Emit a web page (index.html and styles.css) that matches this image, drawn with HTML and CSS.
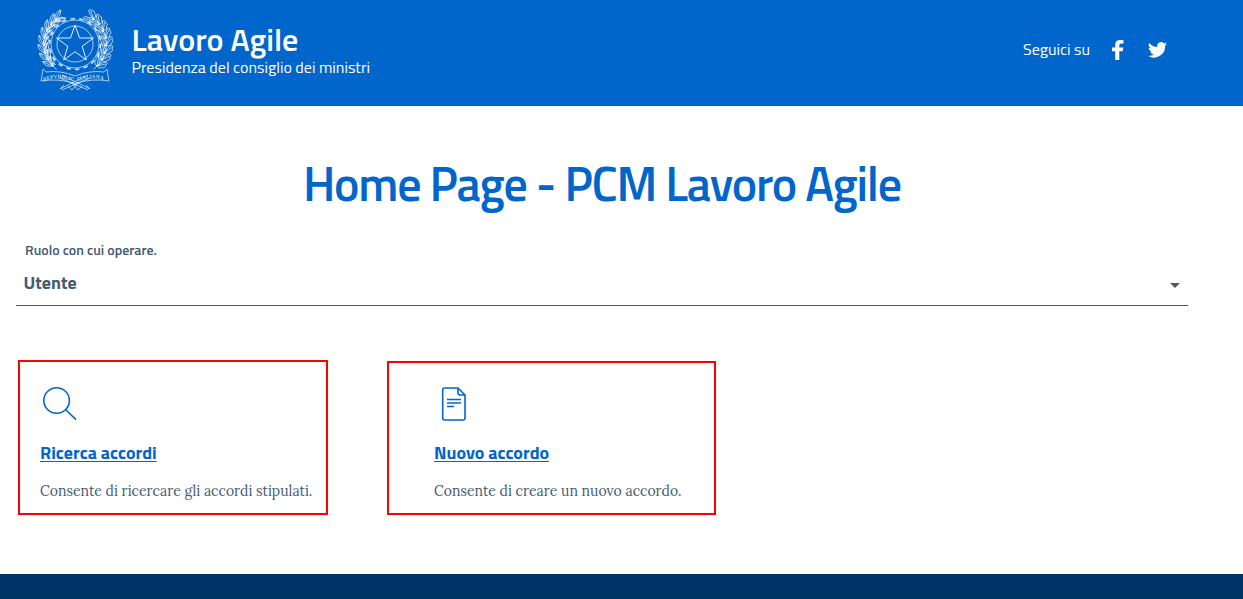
FILE: index.html
```html
<!DOCTYPE html>
<html lang="it">
<head>
<meta charset="utf-8">
<meta name="viewport" content="width=device-width, initial-scale=1">
<title>Lavoro Agile</title>
<link rel="stylesheet" href="styles.css">
</head>
<body>
<header class="header">
  <a class="brand">
    <svg class="emblem" viewBox="0 0 74 84" aria-hidden="true">
      <defs>
        <g id="olive"><path d="M36 4Q41-3 47-.5Q43 5 36 4Q42 4 46 9Q39 11 36 4M36 4Q42 1 47-.5M36 4L46 9M31 4H40M35 7Q40 5 44 6"/></g>
        <g id="oak"><path d="M36 4Q36-1 39-1Q40-4 43-2Q46-3 46 0Q43 3 36 4Q40 3 42 6Q46 6 46 9Q42 12 40 9Q36 9 36 4M36 4L44-1M36 4L44 9M31 4H39"/></g>
        <path id="ribbon-left" d="M6 73.500Q18 67 35 73.500"/>
        <path id="ribbon-right" d="M40 73.500Q54 67 69 73.500"/>
      </defs>
      <g class="lines">
        <circle cx="37" cy="36" r="18"/>
        <circle cx="37" cy="36" r="24"/>
        <circle cx="37" cy="36" r="25.400" class="teeth"/>
        <path class="star" d="M37 17L41.500 30H55.500L44.200 38.300L48.300 52L37 43.800L25.700 52L29.800 38.300L18.500 30H32.500Z"/>
        <g transform="translate(1 1) scale(.97)">
          <use href="#olive" transform="rotate(-134 37 36)"/><use href="#olive" transform="rotate(-120 37 36)"/>
          <use href="#olive" transform="rotate(-106 37 36)"/><use href="#olive" transform="rotate(-92 37 36)"/>
          <use href="#olive" transform="rotate(-78 37 36)"/><use href="#olive" transform="rotate(-64 37 36)"/>
          <use href="#olive" transform="rotate(-50 37 36)"/><use href="#olive" transform="rotate(-38 37 36)"/>
        </g>
        <g transform="translate(73 1) scale(-.97 .97)">
          <use href="#oak" transform="rotate(-134 37 36)"/><use href="#oak" transform="rotate(-120 37 36)"/>
          <use href="#oak" transform="rotate(-106 37 36)"/><use href="#oak" transform="rotate(-92 37 36)"/>
          <use href="#oak" transform="rotate(-78 37 36)"/><use href="#oak" transform="rotate(-64 37 36)"/>
          <use href="#oak" transform="rotate(-50 37 36)"/><use href="#oak" transform="rotate(-36 37 36)"/>
        </g>
        <path class="ribbon" d="M5 61L8 64Q22 62 37 68Q52 62 66 64L69 61L71 73Q54 70 37 75.500Q20 70 3 73Z"/>
        <path d="M22 81L50 67M24 82L52 70M52 81L24 67M50 82L22 70M22 81L26 77M52 81L48 77M30 78L34 82L40 75M44 78L40 82L34 75"/>
      </g>
      <text class="motto"><textPath href="#ribbon-left">REPVBBLICA</textPath></text>
      <text class="motto"><textPath href="#ribbon-right">ITALIANA</textPath></text>
    </svg>
    <span class="brand-text">
      <span class="brand-title">Lavoro Agile</span>
      <span class="brand-sub">Presidenza del consiglio dei ministri</span>
    </span>
  </a>
  <div class="social">
    <span class="follow">Seguici su</span>
    <svg class="facebook" viewBox="0 0 12 20" role="img" aria-label="Facebook"><path d="M3.200 20V11.200H0V7.600H3.200V5C3.200 1.700 5 0 8 0C9.500 0 11 .2 11.500.3V3.500H9.500C7.800 3.500 7.300 4.300 7.300 5.400V7.600H11.300L10.700 11.200H7.300V20Z"/></svg>
    <svg class="twitter" viewBox="0 0 24 20" role="img" aria-label="Twitter"><path d="M24 2.400a10 10 0 0 1-2.800.8A5 5 0 0 0 23.300.5a10 10 0 0 1-3.100 1.200A4.900 4.900 0 0 0 11.800 6.200 14 14 0 0 1 1.700 1 4.900 4.900 0 0 0 3.200 7.600 5 5 0 0 1 1 7v.1a4.900 4.900 0 0 0 3.900 4.800 5 5 0 0 1-2.200.1 4.900 4.900 0 0 0 4.600 3.400A9.900 9.900 0 0 1 0 17.400 14 14 0 0 0 21.500 5Z"/></svg>
  </div>
</header>
<main class="main">
  <h1 class="page-title">Home Page - PCM Lavoro Agile</h1>
  <div class="role">
    <span class="role-label">Ruolo con cui operare.</span>
    <div class="role-select"><span class="role-value">Utente</span><span class="caret"></span></div>
  </div>
  <div class="cards">
    <section class="card search-card">
      <svg class="icon" viewBox="0 0 40 40" aria-hidden="true"><circle cx="16.600" cy="16.500" r="12.800"/><path d="M25.500 25.500L36 35.600"/></svg>
      <a class="card-link">Ricerca accordi</a>
      <p class="card-text">Consente di ricercare gli accordi stipulati.</p>
    </section>
    <section class="card new-card">
      <svg class="icon" viewBox="0 0 40 40" aria-hidden="true"><path d="M10.700 4H24L31 11V34Q31 36 29 36H10.700Q8.700 36 8.700 34V6Q8.700 4 10.700 4ZM24 4V9Q24 11 26 11H31M13 15.500H27M13 19H27M13 22.500H20"/></svg>
      <a class="card-link">Nuovo accordo</a>
      <p class="card-text">Consente di creare un nuovo accordo.</p>
    </section>
  </div>
</main>
<footer class="footer"></footer>
</body>
</html>
```
FILE: styles.css
```css
* { box-sizing: border-box; }
body {
  margin: 0;
  height: 599px;
  display: flex;
  flex-direction: column;
  overflow: hidden;
  background: #fff;
  color: #455b71;
  font-family: "Titillium Web", Roboto, sans-serif;
}
.header {
  height: 106px;
  flex: none;
  display: flex;
  justify-content: space-between;
  padding: 8px 76px 0 38px;
  background: #06c;
  color: #fff;
}
.brand { display: flex; gap: 20px; }
.emblem { width: 74px; height: 84px; overflow: visible; }
.lines { fill: none; stroke: #fff; stroke-width: .65; }
.star { fill: #06c; stroke-width: .9; }
.teeth { stroke-width: 1.8; stroke-dasharray: 4.4 4.4; opacity: .75; }
.ribbon { fill: #06c; }
.motto { font: 5.500px "Liberation Serif", serif; fill: #fff; }
.brand-text { display: flex; flex-direction: column; padding-top: 13px; margin-left: -.5px; white-space: nowrap; }
.brand-title { font-size: 32px; font-weight: 600; line-height: 36px; }
.brand-sub { font-size: 16px; line-height: 20px; }
.social { display: flex; height: 84px; align-items: center; }
.follow { width: 89px; margin-top: -2px; font-size: 16px; white-space: nowrap; }
.facebook { width: 12px; height: 20px; fill: #fff; }
.twitter { width: 19px; height: 16px; margin-left: 24px; fill: #fff; }
.facebook, .twitter { flex: none; }
.main { flex: none; height: 468px; padding: 50px 55px 0 16px; }
.page-title {
  margin: 0 0 2px 287px;
  color: #06c;
  font-size: 48px;
  font-weight: 600;
  line-height: 56px;
  letter-spacing: -1.23px;
  white-space: nowrap;
}
.role { height: 92px; padding-top: 27px; border-bottom: 1px solid #455b71; }
.role-label { display: block; margin-left: 9px; font-size: 14px; font-weight: 600; line-height: 18px; }
.role-select { display: flex; align-items: center; justify-content: space-between; padding: 14px 8px 0; }
.role-value { margin-left: -.5px; font-size: 18px; font-weight: 700; line-height: 20px; }
.caret { margin-top: 4px; border: solid transparent; border-width: 5px 5.500px 0; border-top-color: #455b71; }
.cards { display: flex; gap: 59px; align-items: flex-end; padding: 54px 0 0 2px; }
.card { display: flex; flex-direction: column; align-items: flex-start; border: 2px solid #f00; white-space: nowrap; }
.search-card { width: 310px; height: 155px; padding: 22px 0 0 20px; }
.new-card { width: 329px; height: 154px; padding: 21px 0 0 45px; }
.icon { width: 40px; height: 40px; fill: none; stroke: #06c; stroke-width: 1.6; }
.card-link { margin-top: 17px; color: #06c; font-size: 18px; font-weight: 700; line-height: 24px; text-decoration: underline; text-decoration-thickness: 1px; text-underline-offset: 2px; }
.card-text { margin: 14px 0 0; color: #455b71; font-family: Lora, "Liberation Serif", serif; font-size: 16px; line-height: 22px; transform: scaleX(.875); transform-origin: left; }
.footer { height: 25px; flex: none; background: #036; }
```
